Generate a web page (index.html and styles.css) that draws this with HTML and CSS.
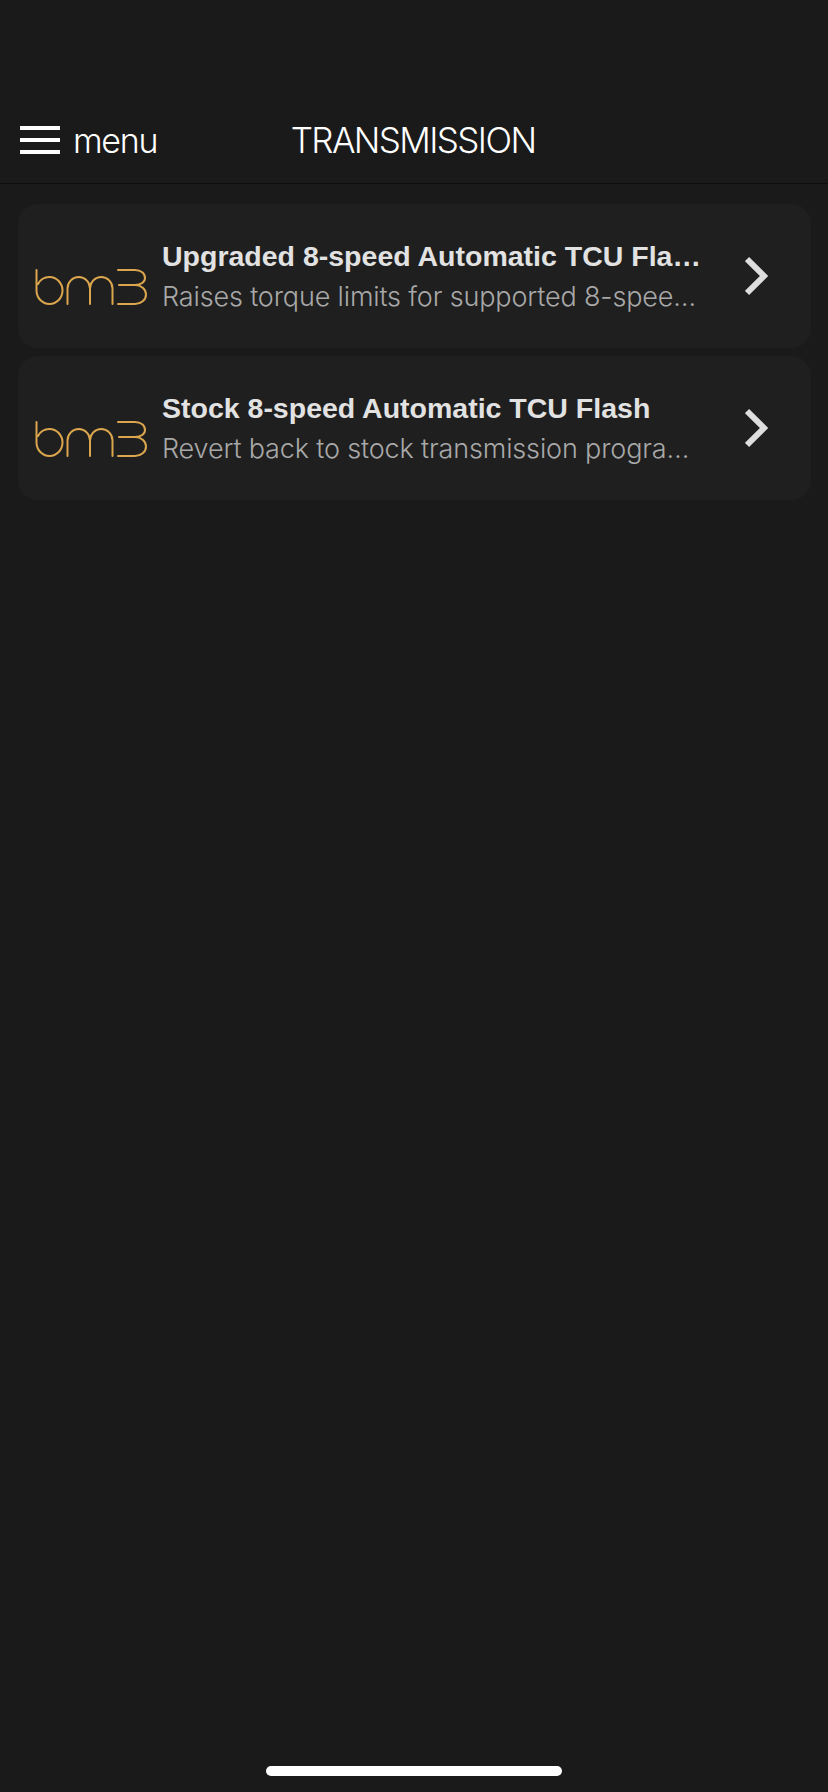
FILE: index.html
```html
<!DOCTYPE html>
<html lang="en">
<head>
    <meta charset="UTF-8">
    <meta name="viewport" content="width=device-width, initial-scale=1.0">
    <title>Transmission</title>
    <link rel="stylesheet" href="styles.css">
</head>
<body>
    <header class="topbar">
        <div class="menu">
            <div class="burger"><span></span><span></span><span></span></div>
            <span class="menu-label">menu</span>
        </div>
        <h1 class="page-title">TRANSMISSION</h1>
    </header>

    <main class="list">
        <div class="card">
            <svg class="logo" viewBox="0 0 112 36" fill="none" stroke="#dba64e" stroke-width="2" stroke-linecap="round" stroke-linejoin="round">
                <path d="M1.500 1V21.500A13 13.500 0 1 0 14.500 8A13 13.500 0 0 0 3 15"/>
                <path d="M32.500 35V19.500A11.250 11.500 0 0 1 55 19.500V35M55 19.500A11.250 11.500 0 0 1 77.500 19.500V35"/>
                <path d="M83 1H100C106 1 110 4.500 110 9C110 13 106 16 100 16H84M100 16C106 16 111 20 111 25.500C111 31 106 35 100 35H83"/>
            </svg>
            <div class="card-text">
                <div class="card-title">Upgraded 8-speed Automatic TCU Fla…</div>
                <div class="card-sub">Raises torque limits for supported 8-spee…</div>
            </div>
            <svg class="chevron" viewBox="0 0 24 40" fill="none" stroke="#dedede" stroke-width="6">
                <path d="M2 3L19 20L2 37"/>
            </svg>
        </div>

        <div class="card">
            <svg class="logo" viewBox="0 0 112 36" fill="none" stroke="#dba64e" stroke-width="2" stroke-linecap="round" stroke-linejoin="round">
                <path d="M1.500 1V21.500A13 13.500 0 1 0 14.500 8A13 13.500 0 0 0 3 15"/>
                <path d="M32.500 35V19.500A11.250 11.500 0 0 1 55 19.500V35M55 19.500A11.250 11.500 0 0 1 77.500 19.500V35"/>
                <path d="M83 1H100C106 1 110 4.500 110 9C110 13 106 16 100 16H84M100 16C106 16 111 20 111 25.500C111 31 106 35 100 35H83"/>
            </svg>
            <div class="card-text">
                <div class="card-title">Stock 8-speed Automatic TCU Flash</div>
                <div class="card-sub">Revert back to stock transmission progra…</div>
            </div>
            <svg class="chevron" viewBox="0 0 24 40" fill="none" stroke="#dedede" stroke-width="6">
                <path d="M2 3L19 20L2 37"/>
            </svg>
        </div>
    </main>

    <div class="home-bar"></div>
</body>
</html>
```
FILE: styles.css
```css
*{
    box-sizing: border-box;
}
body{
    margin: 0;
    height: 1792px;
    display: flex;
    flex-direction: column;
    background-color: #1a1a1a;
    color: #fff;
    font-family: "Liberation Sans", Arial, sans-serif;
    overflow: hidden;
}
.topbar{
    height: 184px;
    padding: 112px 0 0 20px;
    display: grid;
    grid-template-columns: 1fr auto 1fr;
    grid-template-rows: 56px;
    align-items: center;
    border-bottom: 1px solid #0e0e0e;
}
.menu{
    display: flex;
    align-items: center;
    gap: 13px;
}
.burger{
    width: 40px;
    height: 28px;
    display: flex;
    flex-direction: column;
    justify-content: space-between;
}
.burger span{
    height: 4px;
    background-color: #fff;
}
.menu-label{
    font-family: Inter, sans-serif;
    font-weight: 300;
    font-size: 34px;
    letter-spacing: -1.300px;
}
.page-title{
    grid-column: 2;
    margin: 0 22px 0 0;
    font-family: Inter, sans-serif;
    font-weight: 300;
    font-size: 35px;
    letter-spacing: -1.600px;
}
.list{
    padding: 20px 17px 0 18px;
    display: flex;
    flex-direction: column;
    gap: 8px;
}
.card{
    height: 144px;
    padding: 0 0 0 17px;
    display: flex;
    align-items: center;
    background-color: #1f1f1f;
    border-radius: 20px;
}
.logo{
    width: 112px;
    height: 36px;
    flex: none;
    margin-top: 22px;
}
.card-text{
    width: 548px;
    margin-left: 15px;
    min-width: 0;
    white-space: nowrap;
}
.card-title{
    font-weight: 700;
    font-size: 28.500px;
    line-height: 40px;
    color: #e2e2e2;
}
.card-sub{
    margin-top: 1px;
    font-family: Inter, sans-serif;
    font-weight: 300;
    font-size: 27px;
    letter-spacing: -0.150px;
    line-height: 40px;
    color: #a8a8a8;
}
.chevron{
    width: 24px;
    height: 40px;
    flex: none;
    margin: 0 0 0 35px;
}
.home-bar{
    width: 296px;
    height: 10px;
    margin: auto auto 16px;
    background-color: #fff;
    border-radius: 5px;
}
```
